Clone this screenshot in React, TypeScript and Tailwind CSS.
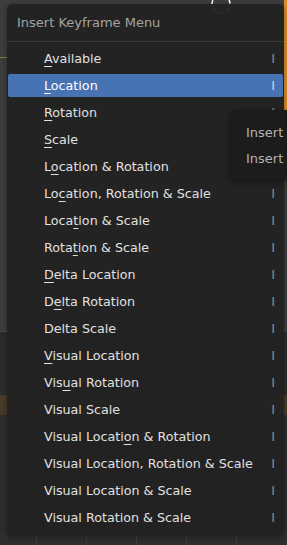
import React from 'react';

type Item = { label: string; u?: number };

const items: Item[] = [
  { label: 'Available', u: 0 },
  { label: 'Location', u: 0 },
  { label: 'Rotation', u: 0 },
  { label: 'Scale', u: 0 },
  { label: 'Location & Rotation', u: 1 },
  { label: 'Location, Rotation & Scale', u: 2 },
  { label: 'Location & Scale', u: 4 },
  { label: 'Rotation & Scale', u: 4 },
  { label: 'Delta Location', u: 0 },
  { label: 'Delta Rotation', u: 1 },
  { label: 'Delta Scale' },
  { label: 'Visual Location', u: 0 },
  { label: 'Visual Rotation', u: 3 },
  { label: 'Visual Scale' },
  { label: 'Visual Location & Rotation', u: 13 },
  { label: 'Visual Location, Rotation & Scale' },
  { label: 'Visual Location & Scale' },
  { label: 'Visual Rotation & Scale' },
];

const Label: React.FC<{ item: Item }> = ({ item }) => {
  if (item.u === undefined) return <span>{item.label}</span>;
  const t = item.label;
  return (
    <span>
      {t.slice(0, item.u)}
      <span className="underline decoration-1 underline-offset-[3px]">{t[item.u]}</span>
      {t.slice(item.u + 1)}
    </span>
  );
};

export default function App() {
  return (
    <div
      className="relative w-[287px] h-[545px] overflow-hidden bg-[#3d3d3d] text-[13px]"
      style={{ fontFamily: '"DejaVu Sans", sans-serif' }}
    >
      {/* viewport behind the menu */}
      <div className="absolute inset-x-0 top-[331px] h-[64px] bg-[#2c2c2c] border-t border-[#484848]">
        <div className="flex justify-between px-[25px] pt-[8px] text-[#4a4a4a]">
          <span>120</span>
          <span className="mr-[16px]">160</span>
        </div>
      </div>
      <div className="absolute inset-x-0 top-[395px] h-[20px] bg-[#4a3b2b]" />
      <div className="absolute inset-x-0 top-[415px] bottom-0 bg-[#2e2e2e]" />
      <div className="absolute right-0 top-0 w-[3px] h-[110px] bg-[#e08a2a]" />
      <div className="absolute left-0 top-[57px] w-[8px] h-[1px] bg-[#6a8e2a]" />
      <div className="absolute inset-x-0 bottom-0 h-[10px] flex">
        {[37, 50, 50, 50, 50].map((w, i) => (
          <div key={i} className="h-full border-r border-[#3c3c3c]" style={{ width: w }} />
        ))}
      </div>
      <svg className="absolute left-[209px] top-[-8px]" width="24" height="24" viewBox="0 0 24 24">
        <circle cx="12" cy="12" r="9" fill="none" stroke="#e03030" strokeWidth="1.5" strokeDasharray="4 4" />
        <circle cx="12" cy="12" r="9" fill="none" stroke="#ffffff" strokeWidth="1.5" strokeDasharray="4 4" strokeDashoffset="4" />
      </svg>

      {/* menu */}
      <div className="absolute left-[7px] top-[4px] w-[277px] h-[531px] rounded-[5px] bg-[rgba(34,34,34,0.94)] shadow-[0_2px_6px_rgba(0,0,0,0.35)] flex flex-col">
        <div className="h-[37px] flex items-center pl-[10px] text-[#a3a3a3]">Insert Keyframe Menu</div>
        <div className="h-px bg-[#3b3b3b]" />
        <div className="flex flex-col pt-[3px] text-[12.7px]">
          {items.map((it, i) => (
            <div key={i} className="h-[27px] px-px py-[2px]">
              <div
                className={`h-full flex items-center justify-between pl-[36px] pr-[8px] rounded-[2px] ${
                  i === 1 ? 'bg-[#4772b3] text-white' : 'text-[#e0e0e0]'
                }`}
              >
                <Label item={it} />
                <span className={i === 1 ? 'text-[#c8d4e6]' : 'text-[#8c8c8c]'}>I</span>
              </div>
            </div>
          ))}
        </div>
      </div>

      {/* submenu peeking in from the right */}
      <div className="absolute left-[230px] top-[110px] w-[80px] h-[70px] rounded-[5px] bg-[#1c1c1c] shadow-[0_2px_6px_rgba(0,0,0,0.4)] flex flex-col pl-[16px] pt-[14px] gap-[8px] text-[#b4b4b4]">
        <span className="leading-[18px]">Insert</span>
        <span className="leading-[18px]">Insert</span>
      </div>
    </div>
  );
}
